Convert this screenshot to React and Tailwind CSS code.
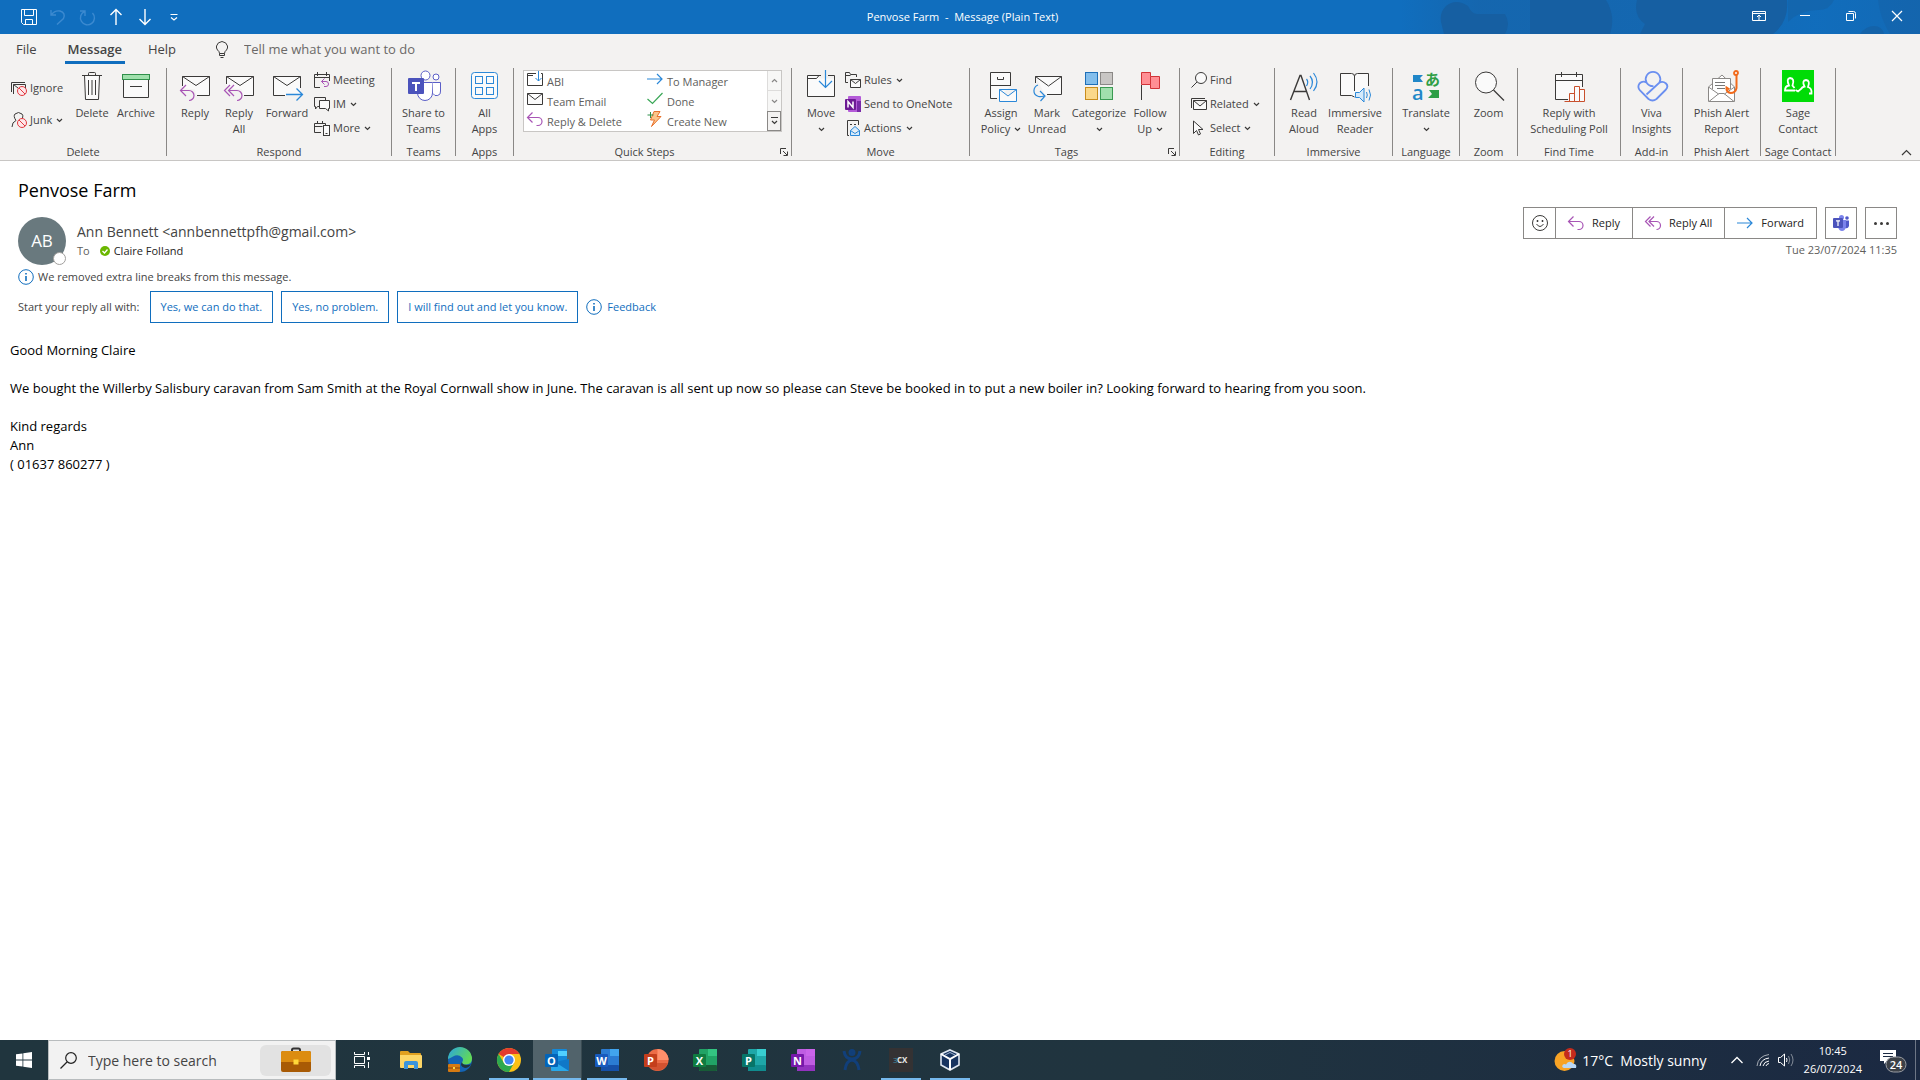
import { clsx } from 'clsx';

const INK = '#3b3a39';
const PURPLE = '#a855b5';
const BLUE = '#2b88d8';

function Svg({ size = 32, className, children }) {
  return (
    <svg
      width={size}
      height={size}
      viewBox={`0 0 ${size} ${size}`}
      fill="none"
      stroke={INK}
      className={clsx('shrink-0 overflow-visible', className)}
      aria-hidden="true"
    >
      {children}
    </svg>
  );
}

function Caret({ className }) {
  return (
    <svg width="7" height="5" viewBox="0 0 7 5" fill="none" stroke={INK} className={clsx('inline-block shrink-0', className)} aria-hidden="true">
      <path d="M1 1l2.5 2.5L6 1" strokeWidth="1.2" />
    </svg>
  );
}

/* ---------- large ribbon icons (32px) ---------- */

const DeleteIcon = () => (
  <Svg>
    <path d="M8.500 5.500l1 24h13l1-24" fill="#fafafa" />
    <path d="M6 5.500h20M12.500 5V3.500q0-1 1-1h5q1 0 1 1V5M12.500 10v15M16 10v15M19.500 10v15" />
  </Svg>
);

const ArchiveIcon = () => (
  <Svg>
    <path d="M3.500 9.500v18h25v-18" fill="#fafafa" />
    <rect x="2.500" y="4.500" width="27" height="5" fill="#9fe0ac" stroke="#2f8f4a" />
    <path d="M10 16.500h12" />
  </Svg>
);

const ReplyIcon = () => (
  <Svg>
    <path d="M3.500 17V6.500h27v19H17l-1-6-9-1z" fill="#fafafa" stroke="none" />
    <path d="M3.500 16V6.500h27v19H18M3.500 6.500l13.500 9 13.500-9" />
    <path d="M7 15l-5.500 5.500L7 26M1.500 20.500H10a5 5 0 0 1 0 10" stroke={PURPLE} strokeWidth="1.200" />
  </Svg>
);

const ReplyAllIcon = () => (
  <Svg>
    <path d="M3.500 17V6.500h27v19H20l-1-6-9-1z" fill="#fafafa" stroke="none" />
    <path d="M3.500 14V6.500h27v19H21M3.500 6.500l13.500 9 13.500-9" />
    <path d="M7 15l-5.500 5.500L7 26M11 15l-5.500 5.500L11 26M5.500 20.500H14a5 5 0 0 1 0 10" stroke={PURPLE} strokeWidth="1.200" />
  </Svg>
);

const ForwardIcon = () => (
  <Svg>
    <path d="M2.500 6.500h27v19h-27z" fill="#fafafa" stroke="none" />
    <path d="M14 25.500H2.500v-19h27V18M2.500 6.500l13.500 9 13.500-9" />
    <path d="M15 24.500h16M25.500 18.500l6 6-6 6" stroke={BLUE} strokeWidth="1.300" />
  </Svg>
);

const TeamsIcon = () => (
  <Svg>
    <circle cx="17.500" cy="5.500" r="4.500" stroke="#5b5fc7" fill="#fff" />
    <circle cx="28" cy="7" r="3" stroke="#5b5fc7" fill="#fff" />
    <path d="M10 12.500h14.500V23a7.500 7.500 0 0 1-15 0" stroke="#5b5fc7" fill="#fff" />
    <path d="M24.500 12.500h8V21a4 4 0 0 1-7.500 2.500" stroke="#5b5fc7" fill="#fff" />
    <rect x="0" y="8" width="16" height="16" rx="1" fill="#4b53bc" stroke="none" />
    <path d="M4 12h8v2H9v7H7v-7H4z" fill="#fff" stroke="none" />
  </Svg>
);

const AllAppsIcon = () => (
  <Svg>
    <g stroke={BLUE}>
      <rect x="2.500" y="2.500" width="26" height="26" rx="3" fill="#fafafa" />
      <rect x="6.500" y="6.500" width="7" height="7" />
      <rect x="17.500" y="6.500" width="7" height="7" />
      <rect x="6.500" y="17.500" width="7" height="7" />
      <rect x="17.500" y="17.500" width="7" height="7" />
    </g>
  </Svg>
);

const MoveIcon = () => (
  <Svg>
    <path d="M2.500 5.500h10l2 3h15v18h-27z" fill="#fafafa" stroke="none" />
    <path d="M16 5.500H2.500v21h27v-21H23M2.500 8.500h9l2.500-3" />
    <path d="M20.500 0v17M14 11l6.500 6.500L27 11" stroke={BLUE} strokeWidth="1.200" />
  </Svg>
);

const PolicyIcon = () => (
  <Svg>
    <path d="M12 28.500H5.500v-26h20V16M5.500 15.500h20" fill="#fafafa" />
    <path d="M12.500 7v2.500h6V7" />
    <path d="M14.500 19.500h17v12h-17zM14.500 19.500l8.500 6.500 8.500-6.500" stroke={BLUE} fill="#fafafa" />
  </Svg>
);

const UnreadIcon = () => (
  <Svg>
    <path d="M4.500 6.500h26v19h-16z" fill="#fafafa" stroke="none" />
    <path d="M4.500 13V6.500h26v18H16M4.500 6.500l13 9.500 13-9.500" />
    <path d="M7 15c-5 2-6 9.500.500 11.500 2 .500 4 0 5.500-.500M9 21l5 5-4.500 5" stroke={BLUE} strokeWidth="1.200" />
  </Svg>
);

const CategorizeIcon = () => (
  <Svg>
    <rect x="2.500" y="2.500" width="12" height="12" fill="#83beec" stroke="#1e6fb8" />
    <rect x="17.500" y="2.500" width="12" height="12" fill="#c8c6c4" stroke="#8a8886" />
    <rect x="2.500" y="17.500" width="12" height="12" fill="#fbd88a" stroke="#c98d1c" />
    <rect x="17.500" y="17.500" width="12" height="12" fill="#a1dfad" stroke="#3a9a52" />
  </Svg>
);

const FollowIcon = () => (
  <Svg>
    <path d="M7.500 15v15" />
    <path d="M7.500 2.500h9v4h9v12h-9v-4h-9z" fill="#ff8f94" stroke="#d13438" />
    <path d="M16.500 6.500v8" stroke="#d13438" />
  </Svg>
);

const ReadAloudIcon = () => (
  <Svg>
    <path d="M2.500 30L12 5.500h1L21.500 30M6 21.500h13" strokeWidth="1.400" />
    <path d="M18.500 9q2.500 3 0 7M22 6q5 6 0 13M25.500 3q7 9 0 18" stroke={BLUE} strokeWidth="1.200" />
  </Svg>
);

const ImmersiveIcon = () => (
  <Svg>
    <path d="M15.500 27l-3-1.500h-11v-22h11q3 0 3 3 0-3 3-3h11V16" fill="#fafafa" />
    <path d="M15.500 6v15" />
    <path d="M16.500 22.500h4l4.500-4.500v14l-4.500-4.500h-4z" stroke={BLUE} fill="#d5eafb" />
    <path d="M27.500 22q1.500 3 0 6M30 19.500q3 5.500 0 11" stroke={BLUE} />
  </Svg>
);

const TranslateIcon = () => (
  <Svg>
    <path d="M3 5h10l-3 3 3 4H3z" fill="#2087c8" stroke="none" />
    <path d="M29 28H18l4-4-3-4h10z" fill="#2e9e46" stroke="none" />
    <text x="2" y="30" fontSize="20" fontWeight="600" fill="#2087c8" stroke="none" fontFamily="Open Sans, sans-serif">a</text>
    <text x="15" y="15" fontSize="15" fontWeight="700" fill="#2e9e46" stroke="none" fontFamily="Noto Sans CJK JP, sans-serif">あ</text>
  </Svg>
);

const ZoomIcon = () => (
  <Svg>
    <circle cx="13" cy="12.500" r="10.500" fill="#fafafa" />
    <path d="M20.500 20L31 30.500" strokeWidth="1.200" />
  </Svg>
);

const PollIcon = () => (
  <Svg>
    <path d="M15 29.500H2.500v-25h27V17" fill="#fafafa" />
    <path d="M2.500 10.500h27M8.500 2v5M23.500 2v5" />
    <path d="M16.500 31.500v-8h5v8M21.500 31.500v-15h5v15M26.500 31.500v-12h5v12zh-15" stroke="#c8502d" fill="#fafafa" />
  </Svg>
);

const VivaIcon = () => (
  <Svg>
    <g stroke="#6a8ff0" strokeWidth="1.800">
      <path d="M10.500 12.500a7.300 7.300 0 1 1 13 0M10.500 12.500q2.500 4 7 3.700" />
      <path d="M10.500 12.500q-4-2-7 1-2.500 3.500.5 7l8.500 8.500q4 3 8 0l9-9q3.500-3.500.5-6.500-3.500-3-7-.5L10.500 24.500" />
    </g>
  </Svg>
);

const PhishIcon = () => (
  <Svg>
    <path d="M2.500 17L16 5l12.500 12v14.500h-26z" stroke="#8a8886" fill="#fff" />
    <path d="M6.500 19V8.500h18V19" stroke="#8a8886" fill="#fff" />
    <path d="M9 12.500h10M9 15.500h10M11 18.500h8" stroke="#777" />
    <path d="M3 31.500l10-8h5l10 8M2.500 17l10 7M28.500 17l-10 7" stroke="#8a8886" />
    <circle cx="30" cy="3" r="2" stroke="#f26a1b" strokeWidth="1.800" />
    <path d="M30.500 5v13q-1 5-6 5-4.500-1-4-5.500l3 2" stroke="#f26a1b" strokeWidth="2" />
  </Svg>
);

const SageIcon = () => (
  <Svg>
    <rect width="32" height="32" fill="#00dc06" stroke="none" />
    <g stroke="#fff" strokeWidth="1.800">
      <path d="M13 20.500H3q0-4.500 4-5-3-7 1-7.500 5 .500 2.500 7.500l2 2.500" />
      <path d="M13.500 20l2.500 1.500 3-2.500q1-2 3.500-2.500-3-6 1.500-6.500 4.500.500 2 7 4 1 3.500 6.500h-2.500" />
    </g>
  </Svg>
);

/* ---------- small icons (16px) ---------- */

const NoSign = () => (
  <>
    <circle cx="11" cy="11" r="4.500" stroke="#e0383e" fill="#fde7e9" />
    <path d="M8 8l6 6" stroke="#e0383e" />
  </>
);

const IgnoreIcon = () => (
  <Svg size={16}>
    <path d="M.500 12V2.500H14M2.500 14V4.500h12V8M2.500 4.500L7 8" />
    <NoSign />
  </Svg>
);

const JunkIcon = () => (
  <Svg size={16}>
    <path d="M1 15q0-5 4-6.500Q2 4 4 2q3.500-3 7 0 1.500 1.500.5 4" />
    <NoSign />
  </Svg>
);

const MeetingIcon = () => (
  <Svg size={16}>
    <path d="M6 15.500H.500v-13h15V9M.500 5.500h15M3.500 0v4M12.500 0v4" />
    <path d="M10.500 6.500l-3 3 3 3M7.500 9.500H12a2.500 2.500 0 0 1 0 5h-2" stroke={PURPLE} />
  </Svg>
);

const ImIcon = () => (
  <Svg size={16}>
    <path d="M5 10.500H3.500l-2 2.500v-2.500h-1v-9h11V4" />
    <path d="M5.500 4.500h10v8h-1V15l-3-2.500h-6z" fill="#fafafa" />
  </Svg>
);

const MoreIcon = () => (
  <Svg size={16}>
    <path d="M7 12.500H.500v-9h11V5M.500 6.500h8M3.500 1v3M8.500 1v3" />
    <rect x="9.500" y="5.500" width="6" height="10" fill="#fafafa" />
    <path d="M11.500 13.500h2" />
  </Svg>
);

const AbiIcon = () => (
  <Svg size={16}>
    <path d="M9 2.500H.500v12h15v-12H14M.500 4.500H6" />
    <path d="M11.500 0v10M8.500 7l3 3 3-3" stroke={BLUE} />
  </Svg>
);

const MailIcon = () => (
  <Svg size={16}>
    <path d="M.500 2.500h15v11H.500zM.500 2.500L8 8.500l7.500-6" fill="#fafafa" />
  </Svg>
);

const ReplyArrow = () => (
  <Svg size={16}>
    <path d="M5.500 1.500l-5 5 5 5M.500 6.500H11a4 4 0 0 1 0 8H9.500" stroke={PURPLE} strokeWidth="1.200" />
  </Svg>
);

const ReplyAllArrow = () => (
  <Svg size={16}>
    <path d="M5.500 1.500l-5 5 5 5M9 1.500l-5 5 5 5M4 6.500h7.500a4 4 0 0 1 0 8" stroke={PURPLE} strokeWidth="1.200" />
  </Svg>
);

const RightArrow = () => (
  <Svg size={16}>
    <path d="M0 8h15M10 3l5 5-5 5" stroke={BLUE} strokeWidth="1.200" />
  </Svg>
);

const DoneIcon = () => (
  <Svg size={16}>
    <path d="M.500 8l5 4.500L15.500 2" stroke="#3aa757" strokeWidth="1.200" />
  </Svg>
);

const CreateIcon = () => (
  <Svg size={16}>
    <path d="M7 .500h6L10 5.500h4L4.500 15.500 7.500 9h-4z" fill="#fbc58a" stroke="#e8702a" />
    <path d="M3.500 1v6M.500 4h6" stroke="#2f8f4a" />
  </Svg>
);

const RulesIcon = () => (
  <Svg size={16}>
    <path d="M3 10.500H.500V.500h4l1 2h6V5M.500 3.500h5" />
    <path d="M5.500 7.500h10v8h-10zM5.500 7.500l5 4 5-4" fill="#fafafa" />
  </Svg>
);

const OneNoteSmall = () => (
  <Svg size={16}>
    <rect x="3" y="0" width="13" height="16" rx="1" fill="#b45bd8" stroke="none" />
    <rect x="12" y="5" width="4" height="11" fill="#7a2aa8" stroke="none" />
    <rect x="0" y="3" width="11" height="11" rx="1" fill="#6d1a94" stroke="none" />
    <path d="M3 11.500v-6l5 6v-6" stroke="#fff" strokeWidth="1.500" />
  </Svg>
);

const ActionsIcon = () => (
  <Svg size={16}>
    <path d="M4 15.500H2.500V.500h11V5" />
    <path d="M5 4.500h2M9 4.500h2" />
    <path d="M5.500 10.500l4.500-4 4.500 4v5h-9zM5.500 10.500l4.500 3 4.500-3" stroke={BLUE} fill="#d5eafb" />
  </Svg>
);

const FindIcon = () => (
  <Svg size={16}>
    <circle cx="10" cy="6" r="5.500" fill="#fafafa" />
    <path d="M6 10L.500 15.500" />
  </Svg>
);

const RelatedIcon = () => (
  <Svg size={16}>
    <path d="M.500 12V2.500H14" />
    <path d="M2.500 4.500h13v9h-13zM2.500 4.500L9 10l6.500-5.500" fill="#fafafa" />
  </Svg>
);

const SelectIcon = () => (
  <Svg size={16}>
    <path d="M2.500 1v12.500l3-3 2 4.500 2-1-2-4.500H12z" fill="#fafafa" />
  </Svg>
);

const InfoIcon = () => (
  <Svg size={16}>
    <circle cx="8" cy="8" r="7.300" stroke="#106ebe" />
    <path d="M8 7v5M8 4v1.600" stroke="#106ebe" strokeWidth="1.600" />
  </Svg>
);

const TeamsSolid = () => (
  <Svg size={16}>
    <g stroke="none">
      <circle cx="8.500" cy="2.500" r="2.500" fill="#7b83eb" />
      <circle cx="14" cy="3" r="1.800" fill="#5059c9" />
      <path d="M12 5.500h4V11q-1 3-4 2z" fill="#5059c9" />
      <path d="M5 5h8v7q-1 4-4 4t-4-4z" fill="#7b83eb" />
      <rect x="0" y="3" width="10" height="10" rx="1" fill="#4b53bc" />
    </g>
    <path d="M3 5.800h4M5 5.800V11" stroke="#fff" strokeWidth="1.200" />
  </Svg>
);

/* ---------- ribbon building blocks ---------- */

function BigButton({ icon: Icon, lines, caret, className }) {
  return (
    <button type="button" className={clsx('flex shrink-0 flex-col items-center pt-0.5 leading-4 whitespace-nowrap', className)}>
      <Icon />
      <span className="mt-[3px]">{lines[0]}</span>
      <span className="flex h-4 items-center gap-1">
        {lines[1]}
        {caret && <Caret />}
      </span>
    </button>
  );
}

function SmallButton({ icon: Icon, label, caret }) {
  return (
    <button type="button" className="flex h-6 items-center gap-[3px] leading-4 whitespace-nowrap">
      <Icon />
      <span>{label}</span>
      {caret && <Caret className="ml-px" />}
    </button>
  );
}

function Launcher({ label }) {
  return (
    <button type="button" aria-label={label} className="flex h-4 w-4 shrink-0 items-center justify-end pr-[3px]">
      <svg width="8" height="8" viewBox="0 0 8 8" fill="none" stroke={INK} aria-hidden="true">
        <path d="M.5 6V.500H6M3 3l4 4M7.500 3.500v4h-4" />
      </svg>
    </button>
  );
}

function Group({ title, launcher, className, children }) {
  return (
    <section aria-label={title} className={clsx('flex h-[92px] shrink-0', className)}>
      <div className="flex min-w-0 flex-1 flex-col">
        <div className="flex h-[76px]">{children}</div>
        <div className="flex items-center">
          <h2 className="flex-1 text-center leading-4 whitespace-nowrap">{title}</h2>
          {launcher && <Launcher label={`${title} settings`} />}
        </div>
      </div>
      <div className="h-[88px] w-px bg-[#8a8886]" />
    </section>
  );
}

const QUICK_STEPS = [
  { label: 'ABI', icon: AbiIcon },
  { label: 'To Manager', icon: RightArrow },
  { label: 'Team Email', icon: MailIcon },
  { label: 'Done', icon: DoneIcon },
  { label: 'Reply & Delete', icon: ReplyArrow },
  { label: 'Create New', icon: CreateIcon },
];

function QuickSteps() {
  return (
    <div className="mt-0.5 ml-[9px] flex h-[62px] w-[259px] border border-[#c8c6c4] bg-white">
      <ul className="grid flex-1 grid-cols-2 pl-[3px]">
        {QUICK_STEPS.map(({ label, icon: Icon }) => (
          <li key={label}>
            <button type="button" className="flex h-5 items-start gap-1 text-[#605e5c]">
              <Icon />
              <span className="pt-[3px] leading-4">{label}</span>
            </button>
          </li>
        ))}
      </ul>
      <div className="flex w-[14px] flex-col">
        <button type="button" aria-label="Previous row" className="flex h-5 items-center justify-center border-b border-l border-[#c8c6c4] bg-[#f3f2f1] opacity-60">
          <Caret className="rotate-180" />
        </button>
        <button type="button" aria-label="Next row" className="flex h-5 items-center justify-center border-l border-[#c8c6c4] bg-[#f3f2f1] opacity-60">
          <Caret />
        </button>
        <button type="button" aria-label="More quick steps" className="flex h-5 flex-col items-center justify-center gap-0.5 border border-[#8a8886] bg-[#f3f2f1]">
          <span className="h-px w-[7px] bg-[#3b3a39]" />
          <Caret />
        </button>
      </div>
    </div>
  );
}

function Ribbon() {
  return (
    <div className="flex border-b border-[#c8c6c4] text-[11px] text-[#444]">
      <Group title="Delete" className="w-[167px]">
        <div className="flex w-[72px] flex-col gap-2 pt-2 pl-[11px]">
          <SmallButton icon={IgnoreIcon} label="Ignore" />
          <SmallButton icon={JunkIcon} label="Junk" caret />
        </div>
        <BigButton icon={DeleteIcon} lines={['Delete']} className="w-10" />
        <BigButton icon={ArchiveIcon} lines={['Archive']} className="w-12" />
      </Group>
      <Group title="Respond" className="w-[225px]">
        <BigButton icon={ReplyIcon} lines={['Reply']} className="ml-1.5 w-11" />
        <BigButton icon={ReplyAllIcon} lines={['Reply', 'All']} className="w-11" />
        <BigButton icon={ForwardIcon} lines={['Forward']} className="w-[52px]" />
        <div className="flex flex-col pl-px">
          <SmallButton icon={MeetingIcon} label="Meeting" />
          <SmallButton icon={ImIcon} label="IM" caret />
          <SmallButton icon={MoreIcon} label="More" caret />
        </div>
      </Group>
      <Group title="Teams" className="w-16">
        <BigButton icon={TeamsIcon} lines={['Share to', 'Teams']} className="flex-1" />
      </Group>
      <Group title="Apps" className="w-[58px]">
        <BigButton icon={AllAppsIcon} lines={['All', 'Apps']} className="flex-1" />
      </Group>
      <Group title="Quick Steps" launcher className="w-[278px]">
        <QuickSteps />
      </Group>
      <Group title="Move" className="w-[178px]">
        <BigButton icon={MoveIcon} lines={['Move']} caret className="ml-1.5 w-[46px]" />
        <div className="flex flex-col pl-px">
          <SmallButton icon={RulesIcon} label="Rules" caret />
          <SmallButton icon={OneNoteSmall} label="Send to OneNote" />
          <SmallButton icon={ActionsIcon} label="Actions" caret />
        </div>
      </Group>
      <Group title="Tags" launcher className="w-[210px]">
        <BigButton icon={PolicyIcon} lines={['Assign', 'Policy']} caret className="ml-2 w-[46px]" />
        <BigButton icon={UnreadIcon} lines={['Mark', 'Unread']} className="w-[46px]" />
        <BigButton icon={CategorizeIcon} lines={['Categorize']} caret className="w-[58px]" />
        <BigButton icon={FollowIcon} lines={['Follow', 'Up']} caret className="w-11" />
      </Group>
      <Group title="Editing" className="w-[95px]">
        <div className="flex flex-col pl-[11px]">
          <SmallButton icon={FindIcon} label="Find" />
          <SmallButton icon={RelatedIcon} label="Related" caret />
          <SmallButton icon={SelectIcon} label="Select" caret />
        </div>
      </Group>
      <Group title="Immersive" className="w-[118px]">
        <BigButton icon={ReadAloudIcon} lines={['Read', 'Aloud']} className="ml-1.5 w-[46px]" />
        <BigButton icon={ImmersiveIcon} lines={['Immersive', 'Reader']} className="w-[56px]" />
      </Group>
      <Group title="Language" className="w-[67px]">
        <BigButton icon={TranslateIcon} lines={['Translate']} caret className="flex-1" />
      </Group>
      <Group title="Zoom" className="w-[58px]">
        <BigButton icon={ZoomIcon} lines={['Zoom']} className="flex-1" />
      </Group>
      <Group title="Find Time" className="w-[103px]">
        <BigButton icon={PollIcon} lines={['Reply with', 'Scheduling Poll']} className="flex-1" />
      </Group>
      <Group title="Add-in" className="w-[62px]">
        <BigButton icon={VivaIcon} lines={['Viva', 'Insights']} className="flex-1" />
      </Group>
      <Group title="Phish Alert" className="w-[78px]">
        <BigButton icon={PhishIcon} lines={['Phish Alert', 'Report']} className="flex-1" />
      </Group>
      <Group title="Sage Contact" className="w-[75px]">
        <BigButton icon={SageIcon} lines={['Sage', 'Contact']} className="flex-1" />
      </Group>
      <button type="button" aria-label="Collapse ribbon" className="mt-auto mr-2 mb-1 ml-auto">
        <svg width="11" height="7" viewBox="0 0 11 7" fill="none" stroke={INK} aria-hidden="true">
          <path d="M1 6l4.500-4.500L10 6" strokeWidth="1.200" />
        </svg>
      </button>
    </div>
  );
}

function TitleBar() {
  return (
    <header className="relative flex h-[34px] items-center justify-between overflow-hidden bg-[#106ebe] text-white">
      <svg className="absolute top-0 right-0" width="520" height="34" viewBox="0 0 520 34" aria-hidden="true">
        <defs>
          <linearGradient id="bar" x1="0" x2="1">
            <stop offset="0" stopColor="#1763a8" stopOpacity="0" />
            <stop offset=".15" stopColor="#1763a8" stopOpacity=".7" />
            <stop offset=".5" stopColor="#1763a8" stopOpacity=".6" />
            <stop offset=".8" stopColor="#1763a8" stopOpacity=".1" />
            <stop offset="1" stopColor="#1763a8" stopOpacity=".4" />
          </linearGradient>
        </defs>
        <rect width="520" height="34" fill="url(#bar)" />
        <g fill="#165fa2">
          <path d="M42 26q-4-12 4-20 10-8 22 0 4 8 9 8h28q6 10 0 20H44z" />
          <path d="M130 0h76q10 16 4 34h-80z" />
          <path d="M237 0h150q2 22-14 34H240l5-10q-12-8-8-24z" />
          <path d="M388 0h46q-4 10-16 10-18 0-30 12z" opacity=".5" />
          <path d="M460 34q6-8 14-8t10 8z" opacity=".7" />
          <path d="M478 0h42v34h-30q-10-16-12-34z" opacity=".4" />
        </g>
      </svg>
      <div className="relative flex flex-1 items-center gap-[11px] pl-5">
        <button type="button" aria-label="Save">
          <Svg size={18}>
            <path d="M1.500 1.500h15v15H3.500l-2-2zM4.500 1.500v6h9v-6M5.500 16.500v-5h7v5" stroke="#fff" />
          </Svg>
        </button>
        <button type="button" aria-label="Undo">
          <Svg size={18}>
            <path d="M2 2v5h5M2 7q4-5 9-4 6 2 3.500 7.500L8 16.500" stroke="#3c8ad0" strokeWidth="1.400" />
          </Svg>
        </button>
        <button type="button" aria-label="Redo">
          <Svg size={18}>
            <path d="M2 3h5v5M6.500 3.500a7 7 0 1 0 8 1.500" stroke="#3c8ad0" strokeWidth="1.400" />
          </Svg>
        </button>
        <button type="button" aria-label="Previous item">
          <Svg size={18}>
            <path d="M9 17V1.500M3.500 7L9 1.500 14.500 7" stroke="#fff" strokeWidth="1.400" />
          </Svg>
        </button>
        <button type="button" aria-label="Next item">
          <Svg size={18}>
            <path d="M9 1v15.500M3.500 11L9 16.500 14.500 11" stroke="#fff" strokeWidth="1.400" />
          </Svg>
        </button>
        <button type="button" aria-label="Customise toolbar">
          <Svg size={18}>
            <path d="M5.500 6.500h7M6 9.500l3 2.500 3-2.500" stroke="#fff" strokeWidth="1.200" />
          </Svg>
        </button>
      </div>
      <h1 className="relative text-[11px] whitespace-pre">Penvose Farm  -  Message (Plain Text)</h1>
      <div className="relative flex flex-1 items-center justify-end gap-[30px] pr-[15px] pb-0.5">
        <button type="button" aria-label="Ribbon display options">
          <Svg size={16}>
            <path d="M1.500 3.500h13v9h-13zM1.500 5.500h13M8 12V7M6 9l2-2 2 2" stroke="#fff" />
          </Svg>
        </button>
        <button type="button" aria-label="Minimize">
          <Svg size={16}>
            <path d="M3 7.500h10" stroke="#fff" />
          </Svg>
        </button>
        <button type="button" aria-label="Restore">
          <Svg size={16}>
            <path d="M3.500 5.500h7v7h-7zM5.500 3.500h5q2 0 2 2v5" stroke="#fff" />
          </Svg>
        </button>
        <button type="button" aria-label="Close">
          <Svg size={16}>
            <path d="M3 3l10 10M13 3L3 13" stroke="#fff" strokeWidth="1.200" />
          </Svg>
        </button>
      </div>
    </header>
  );
}

function Tabs() {
  return (
    <nav className="flex h-[34px] items-center pb-0.5 text-[13px] text-[#444]">
      <button type="button" className="ml-4 h-7">File</button>
      <button type="button" className="ml-7 h-7 border-b-[3px] border-[#106ebe] px-[3px] pt-[3px] font-semibold">Message</button>
      <button type="button" className="ml-[23px] h-7">Help</button>
      <label className="ml-[38px] flex items-center gap-3.5">
        <svg width="16" height="18" viewBox="0 0 16 18" fill="none" stroke={INK} aria-hidden="true">
          <path d="M5.500 12.500Q5.500 10.500 3.500 9 2 7 2.500 5q1-4 5.500-4.500 4.500.500 5.500 4.500.500 2-1 4-2 1.500-2 3.500zM5.500 12.500v2h5v-2M6.500 16.500h3" />
        </svg>
        <input
          type="text"
          aria-label="Tell me what you want to do"
          placeholder="Tell me what you want to do"
          className="w-60 bg-transparent outline-none placeholder:text-[#6b6967]"
        />
      </label>
    </nav>
  );
}

const SUGGESTIONS = ['Yes, we can do that.', 'Yes, no problem.', 'I will find out and let you know.'];

function MessageHeader() {
  return (
    <div className="flex justify-between px-[18px] pt-[13px]">
      <div>
        <h2 className="text-[18px] leading-8 text-black">Penvose Farm</h2>
        <div className="mt-[11px] flex items-center gap-[11px]">
          <div className="relative flex size-12 items-center justify-center rounded-full bg-[#69797e] text-[17px] text-white">
            AB
            <span className="absolute right-0 bottom-0 size-[13px] rounded-full border border-[#a19f9d] bg-white" />
          </div>
          <div>
            <p className="text-[14px] leading-5 text-[#444]">Ann Bennett &lt;annbennettpfh@gmail.com&gt;</p>
            <p className="flex items-center text-[11px] leading-[18px] text-[#252423]">
              <span className="text-[#605e5c]">To</span>
              <svg width="10" height="10" viewBox="0 0 10 10" className="mr-1 ml-2.5" aria-hidden="true">
                <circle cx="5" cy="5" r="5" fill="#6bb700" />
                <path d="M2.500 5l2 2 3-3.500" fill="none" stroke="#fff" strokeWidth="1.300" />
              </svg>
              Claire Folland
            </p>
          </div>
        </div>
        <p className="mt-1 flex h-4 items-center gap-1 text-[11px] text-[#444]">
          <InfoIcon />
          We removed extra line breaks from this message.
        </p>
        <div className="mt-1.5 flex items-center gap-2 text-[11px] text-[#444]">
          <span className="mr-0.5">Start your reply all with:</span>
          {SUGGESTIONS.map((text) => (
            <button key={text} type="button" className="h-8 border border-[#106ebe] px-2.5 text-[#106ebe]">
              {text}
            </button>
          ))}
          <button type="button" className="flex items-center gap-[5px] text-[#106ebe]">
            <InfoIcon />
            Feedback
          </button>
        </div>
      </div>
      <div className="flex flex-col items-end pt-[33px] pr-[5px] text-[11px] text-[#252423]">
        <div className="flex gap-2">
          <div className="flex h-8 divide-x divide-[#8a8886] border border-[#8a8886]">
            <button type="button" aria-label="React" className="flex w-8 items-center justify-center">
              <Svg size={16}>
                <circle cx="8" cy="8" r="7.500" />
                <path d="M4.500 9q3.500 5 7 0" />
                <path d="M5.500 5v2M10.500 5v2" strokeWidth="1.500" />
              </Svg>
            </button>
            <button type="button" className="flex items-center gap-2 px-3">
              <ReplyArrow />
              Reply
            </button>
            <button type="button" className="flex items-center gap-2 px-3">
              <ReplyAllArrow />
              Reply All
            </button>
            <button type="button" className="flex items-center gap-2 px-3">
              <RightArrow />
              Forward
            </button>
          </div>
          <button type="button" aria-label="Share to Teams" className="flex size-8 items-center justify-center border border-[#8a8886]">
            <TeamsSolid />
          </button>
          <button type="button" aria-label="More actions" className="flex size-8 items-center justify-center gap-[3px] border border-[#8a8886]">
            <span className="size-[3px] rounded-full bg-[#3b3a39]" />
            <span className="size-[3px] rounded-full bg-[#3b3a39]" />
            <span className="size-[3px] rounded-full bg-[#3b3a39]" />
          </button>
        </div>
        <time className="mt-[3px] leading-4 text-[#605e5c]">Tue 23/07/2024 11:35</time>
      </div>
    </div>
  );
}

function MessageBody() {
  return (
    <article className="flex flex-1 flex-col gap-[19px] px-2.5 pt-[18px] text-[13px] leading-[19px] text-black">
      <p>Good Morning Claire</p>
      <p>
        We bought the Willerby Salisbury caravan from Sam Smith at the Royal Cornwall show in June. The caravan is all sent
        up now so please can Steve be booked in to put a new boiler in? Looking forward to hearing from you soon.
      </p>
      <p>
        Kind regards
        <br />
        Ann
        <br />( 01637 860277 )
      </p>
    </article>
  );
}

/* ---------- taskbar ---------- */

function OfficeIcon({ letter, main, light, mid, dark, round }) {
  return (
    <Svg size={24}>
      <g stroke="none">
        {round ? (
          <>
            <circle cx="13.500" cy="12" r="11" fill={mid} />
            <path d="M13.500 1a11 11 0 0 1 11 11h-11z" fill={light} />
            <path d="M3 15h21a11 11 0 0 1-21 0z" fill={dark} />
          </>
        ) : (
          <>
            <rect x="6" y="1" width="18" height="22" rx="1" fill={mid} />
            <rect x="15" y="1" width="9" height="7" fill={light} />
            <rect x="6" y="17" width="18" height="6" rx="1" fill={dark} />
          </>
        )}
        <rect x="0" y="6" width="13" height="13" rx="1" fill={main} />
        <text x="6.500" y="16.500" textAnchor="middle" fontSize="11" fontWeight="700" fill="#fff" fontFamily="Open Sans, sans-serif">
          {letter}
        </text>
      </g>
    </Svg>
  );
}

const TaskViewIcon = () => (
  <Svg size={16}>
    <path d="M.500 0v2.500h10V0M.500 16v-2.500h10V16M.500 4.500h10v7H.500zM14.500 0v3M14.500 10v6" stroke="#fff" />
    <rect x="13" y="5" width="3" height="3" fill="#fff" stroke="none" />
  </Svg>
);

const ExplorerIcon = () => (
  <Svg size={24}>
    <g stroke="none">
      <path d="M1 4q0-1 1-1h7l2 2h10q1 0 1 1v4H1z" fill="#e0a020" />
      <path d="M1 7h21q1 0 1 1v11q0 1-1 1H2q-1 0-1-1z" fill="#fcd667" />
      <path d="M5 21v-6q0-2 2-2h10q2 0 2 2v6h-4v-4H9v4z" fill="#3a94dc" />
    </g>
  </Svg>
);

const EdgeIcon = () => (
  <Svg size={24}>
    <defs>
      <linearGradient id="edge" x1="0" y1="0" x2="1" y2=".5">
        <stop offset="0" stopColor="#2aa5e0" />
        <stop offset="1" stopColor="#62d957" />
      </linearGradient>
    </defs>
    <g stroke="none">
      <circle cx="12" cy="12" r="12" fill="#1464b4" />
      <path d="M0 11A12 12 0 0 1 24 11q0 5-6 5.500-4 0-4-2 2-3 0-5-4-4-9-1-4 2-5 2.500z" fill="url(#edge)" />
      <path d="M14 14q0 3 5 3 3 0 4-1-2 4-6 4-6-2-3-6z" fill="#20343e" />
      <rect x="0" y="16" width="12" height="8" rx="1" fill="#d67a12" />
      <path d="M0 20h12" stroke="#8a4708" />
      <rect x="5" y="19" width="2" height="2" fill="#ffd23e" />
    </g>
  </Svg>
);

const ChromeIcon = () => (
  <Svg size={24}>
    <g stroke="none">
      <circle cx="12" cy="12" r="12" fill="#fbc116" />
      <path d="M12 12L1.600 6A12 12 0 0 1 22.400 6H12z" fill="#e33b2e" />
      <path d="M1.600 6A12 12 0 0 0 12 24l5-9-10 0z" fill="#2da94f" />
      <circle cx="12" cy="12" r="6" fill="#fff" />
      <circle cx="12" cy="12" r="4.600" fill="#4086f4" />
    </g>
  </Svg>
);

const OutlookIcon = () => (
  <Svg size={24}>
    <g stroke="none">
      <rect x="7" y="1" width="15" height="14" rx="1" fill="#1488d8" />
      <rect x="13" y="3" width="9" height="5" fill="#50d0ff" />
      <path d="M6 12l9 5 9-6v11q0 1-1 1H7q-1 0-1-1z" fill="#28a8ea" />
      <path d="M10 14l14 9V11z" fill="#0f78c8" />
      <rect x="0" y="6" width="13" height="13" rx="1" fill="#0364b8" />
      <text x="6.500" y="16.500" textAnchor="middle" fontSize="11" fontWeight="700" fill="#fff" fontFamily="Open Sans, sans-serif">O</text>
    </g>
  </Svg>
);

const ToolIcon = () => (
  <Svg size={24}>
    <g stroke="#113f7a" strokeWidth="3">
      <circle cx="12" cy="4.500" r="2" fill="#113f7a" />
      <path d="M4 3q1 8 8 8t8-8M5 22q1-9 7-10 6 1 7 10" />
    </g>
  </Svg>
);

const CxIcon = () => (
  <Svg size={24}>
    <rect width="24" height="24" fill="#343233" stroke="none" />
    <text x="4" y="15" fontSize="8" fill="#3f93ad" stroke="none" fontFamily="Open Sans, sans-serif">3</text>
    <text x="8" y="15" fontSize="8" fontWeight="700" fill="#e8e8e8" stroke="none" fontFamily="Open Sans, sans-serif">CX</text>
  </Svg>
);

const BoxIcon = () => (
  <Svg size={24}>
    <path d="M12 2l9 4v11l-9 5-9-5V6z" fill="#16335f" stroke="#dfe7f2" strokeWidth="1.600" />
    <path d="M3 6l9 5 9-5M12 11v11" stroke="#fff" strokeWidth="2" />
    <path d="M7 7l5-2.500L17 7" stroke="#9fb4d0" />
  </Svg>
);

const APPS = [
  { name: 'Task View', icon: <TaskViewIcon /> },
  { name: 'File Explorer', icon: <ExplorerIcon /> },
  { name: 'Edge', icon: <EdgeIcon /> },
  { name: 'Chrome', icon: <ChromeIcon />, open: true },
  { name: 'Outlook', icon: <OutlookIcon />, open: true, active: true },
  { name: 'Word', icon: <OfficeIcon letter="W" main="#185abd" light="#41a5ee" mid="#2b7cd3" dark="#1650a8" />, open: true },
  { name: 'PowerPoint', icon: <OfficeIcon letter="P" main="#c43e1c" light="#ff8f6b" mid="#ed6c47" dark="#d35230" round /> },
  { name: 'Excel', icon: <OfficeIcon letter="X" main="#107c41" light="#33c481" mid="#21a366" dark="#185c37" /> },
  { name: 'Publisher', icon: <OfficeIcon letter="P" main="#077568" light="#38ced0" mid="#1fa7a8" dark="#108c8e" /> },
  { name: 'OneNote', icon: <OfficeIcon letter="N" main="#7719aa" light="#ca64ea" mid="#bf5de2" dark="#9332bf" /> },
  { name: 'Support tool', icon: <ToolIcon /> },
  { name: '3CX', icon: <CxIcon />, open: true },
  { name: 'VirtualBox', icon: <BoxIcon />, open: true },
];

function Taskbar() {
  return (
    <footer className="flex h-10 items-stretch bg-linear-to-r from-[#20353e] via-[#20343f] via-60% to-[#1b2942] text-white">
      <button type="button" aria-label="Start" className="flex w-12 items-center justify-center">
        <svg width="16" height="16" viewBox="0 0 16 16" fill="#fff" aria-hidden="true">
          <path d="M0 2.300L6.500 1.400V7.600H0zM7.300 1.300L16 0v7.600H7.300zM0 8.400h6.500v6.200L0 13.700zM7.300 8.400H16V16l-8.700-1.300z" />
        </svg>
      </button>
      <label className="flex w-72 items-center border border-[#b8bcbe] bg-[#f2f2f2] pl-[11px]">
        <svg width="17" height="17" viewBox="0 0 17 17" fill="none" stroke="#222" aria-hidden="true">
          <circle cx="11" cy="6" r="5.300" strokeWidth="1.200" />
          <path d="M7 10L.500 16.500" strokeWidth="1.300" />
        </svg>
        <input type="text" aria-label="Search" placeholder="Type here to search" className="ml-[11px] min-w-0 flex-1 bg-transparent text-[14px] outline-none placeholder:text-[#444]" />
        <span className="mr-1 flex h-[31px] w-[71px] items-center justify-center rounded-md bg-[#e2e2e2]">
          <svg width="30" height="26" viewBox="0 0 30 26" aria-hidden="true">
            <path d="M11 5V3q0-1.500 1.500-1.500h5Q19 1.500 19 3v2" fill="none" stroke="#333" strokeWidth="2" />
            <rect x="0" y="4" width="30" height="21" rx="2" fill="#a85a05" />
            <path d="M0 6q0-2 2-2h26q2 0 2 2v9H0z" fill="#dc8c10" />
            <rect x="12.500" y="12.500" width="5" height="5" fill="#ffd83a" />
          </svg>
        </span>
      </label>
      <div className="flex pl-px">
        {APPS.map(({ name, icon, open, active }) => (
          <button
            key={name}
            type="button"
            aria-label={name}
            className={clsx('flex w-[49px] flex-col items-center', active && 'border-r border-[#3a4b52] bg-[#51636b]')}
          >
            <span className="flex h-[38px] items-center pt-0.5">{icon}</span>
            {open && <span className={clsx('h-0.5 bg-[#76b9ed]', active ? 'w-full' : 'w-10')} />}
          </button>
        ))}
      </div>
      <div className="ml-auto flex items-center">
        <button type="button" className="flex items-center text-[14px] whitespace-pre">
          <svg width="24" height="24" viewBox="0 0 24 24" className="mr-1" aria-hidden="true">
            <circle cx="10.500" cy="13" r="10" fill="#f8a325" />
            <path d="M10 20q-3-1-1-3.500 1.500-1 3 0 2-4 6-2 1 1.500 2.500 1.500 2.500.500 1.500 4z" fill="#b9d7f5" />
            <circle cx="16" cy="6" r="6" fill="#c42b1c" />
            <text x="16" y="9" textAnchor="middle" fontSize="9" fill="#fff" fontFamily="Open Sans, sans-serif">1</text>
          </svg>
          17°C  Mostly sunny
        </button>
        <button type="button" aria-label="Show hidden icons" className="ml-6">
          <svg width="12" height="8" viewBox="0 0 12 8" fill="none" stroke="#fff" aria-hidden="true">
            <path d="M.5 7L6 1.500 11.500 7" strokeWidth="1.300" />
          </svg>
        </button>
        <button type="button" aria-label="Network" className="ml-[13px]">
          <Svg size={14}>
            <g stroke="#fff">
              <path d="M1 13Q2 3 13 1.500" opacity=".6" />
              <path d="M4 13q1-7 9-8M7 13q1-4.500 6-5M10 13q.5-2 3-2.500" />
            </g>
          </Svg>
        </button>
        <button type="button" aria-label="Volume" className="ml-2">
          <Svg size={16}>
            <path d="M.500 5.500h2L6.500 2v12l-4-3.500h-2z" stroke="#fff" />
            <path d="M8.500 6q1 2 0 4" stroke="#fff" />
            <path d="M10.500 4q2.500 4 0 8M13 2q4 6 0 12" stroke="#fff" opacity=".45" />
          </Svg>
        </button>
        <div className="ml-2.5 text-center text-[11px] leading-[18px]">
          <p>10:45</p>
          <p>26/07/2024</p>
        </div>
        <button type="button" aria-label="24 notifications" className="ml-[18px]">
          <svg width="27" height="26" viewBox="0 0 27 26" aria-hidden="true">
            <path d="M0 3h16v11H7l-3 3v-3H0z" fill="#fff" />
            <path d="M3 6.500h10M3 9.500h10" stroke="#1b2942" />
            <rect x="6" y="10" width="20" height="15" rx="7.500" fill="#3c4148" stroke="#9a9da3" />
            <text x="16" y="21.500" textAnchor="middle" fontSize="11" fontWeight="600" fill="#fff" fontFamily="Open Sans, sans-serif">24</text>
          </svg>
        </button>
        <span className="mr-1 ml-2 h-10 w-px bg-[#6d7686]" />
      </div>
    </footer>
  );
}

export default function App() {
  return (
    <div className="flex min-h-screen flex-col bg-white font-['Open_Sans','Noto_Sans',sans-serif]">
      <TitleBar />
      <div className="bg-[#f3f2f1]">
        <Tabs />
        <Ribbon />
      </div>
      <main className="flex flex-1 flex-col">
        <MessageHeader />
        <MessageBody />
      </main>
      <Taskbar />
    </div>
  );
}
